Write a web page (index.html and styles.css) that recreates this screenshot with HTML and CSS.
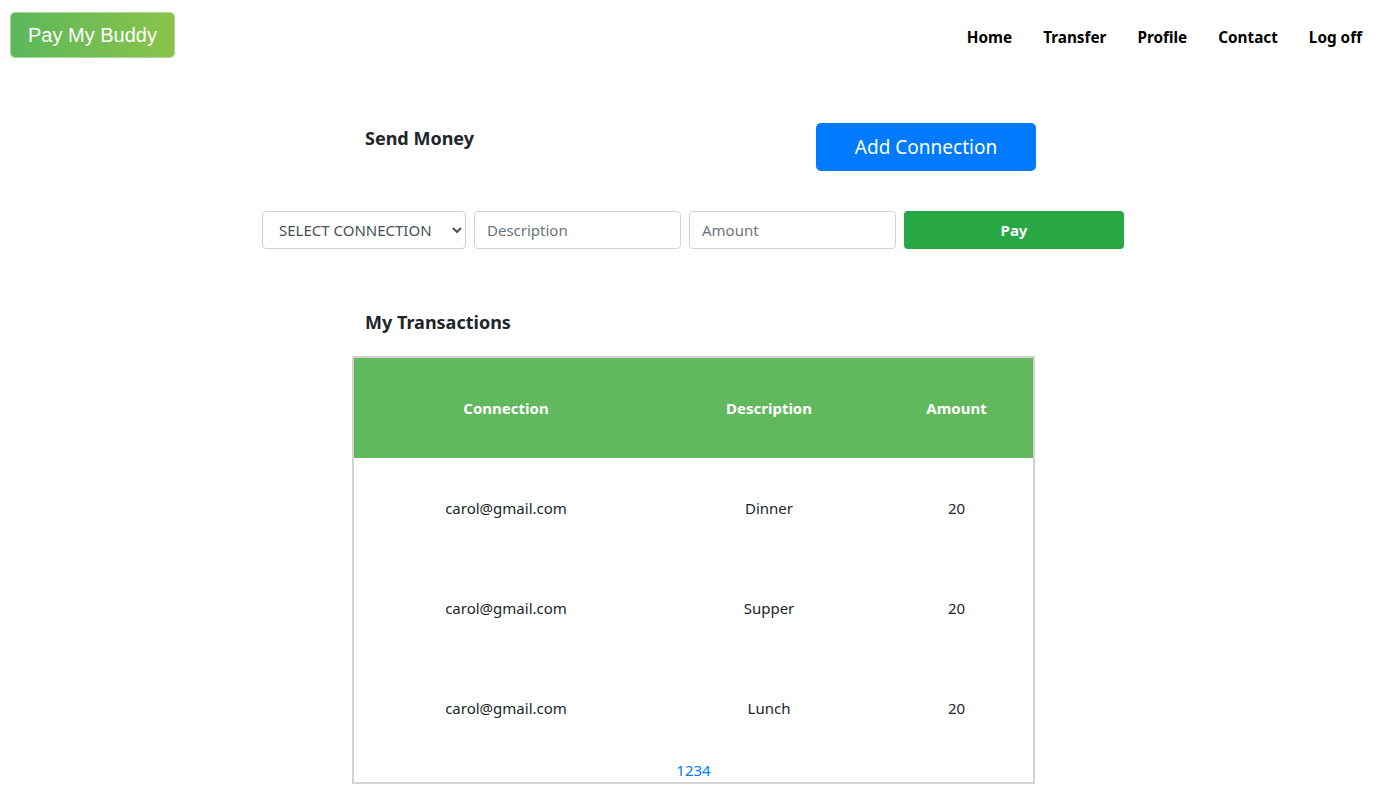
FILE: index.html
```html
<!DOCTYPE html>
<html lang="en">
<head>
<meta charset="utf-8">
<title>Pay My Buddy - Transfer</title>
<link rel="stylesheet" href="styles.css">
</head>
<body>
<header class="topbar">
  <a class="logo" href="#">Pay My Buddy</a>
  <nav class="nav">
    <a href="#">Home</a>
    <a href="#">Transfer</a>
    <a href="#">Profile</a>
    <a href="#">Contact</a>
    <a href="#">Log off</a>
  </nav>
</header>
<main class="main">
  <section class="send-head">
    <h2 class="title">Send Money</h2>
    <button class="btn-add">Add Connection</button>
  </section>
  <form class="pay-form">
    <select class="field select">
      <option>SELECT CONNECTION</option>
    </select>
    <input class="field" type="text" placeholder="Description">
    <input class="field" type="text" placeholder="Amount">
    <button class="btn-pay" type="button">Pay</button>
  </form>
  <section class="tx">
    <h2 class="title tx-title">My Transactions</h2>
    <div class="table-box">
      <table class="tx-table">
        <thead>
          <tr><th class="c1">Connection</th><th class="c2">Description</th><th class="c3">Amount</th></tr>
        </thead>
        <tbody>
          <tr><td>carol@gmail.com</td><td>Dinner</td><td>20</td></tr>
          <tr><td>carol@gmail.com</td><td>Supper</td><td>20</td></tr>
          <tr><td>carol@gmail.com</td><td>Lunch</td><td>20</td></tr>
        </tbody>
      </table>
      <div class="pager"><a href="#">1</a><a href="#">2</a><a href="#">3</a><a href="#">4</a></div>
    </div>
  </section>
</main>
</body>
</html>
```
FILE: styles.css
```css
* { box-sizing: border-box; }
body {
  margin: 0;
  font-family: "Noto Sans", "Open Sans", sans-serif;
  color: #212529;
  background: #fff;
}
.topbar {
  display: flex;
  justify-content: space-between;
  align-items: center;
  padding: 12px 24px 0 10px;
  height: 58px;
}
.logo {
  display: flex;
  align-items: center;
  justify-content: center;
  width: 165px;
  height: 46px;
  padding-top: 1px;
  border-radius: 5px;
  background: linear-gradient(90deg, #5cb85c, #8bc34a);
  border: 1px solid #a9d59a;
  color: #fff;
  font-family: "Liberation Sans", Arial, sans-serif;
  font-size: 20px;
  text-decoration: none;
}
.nav {
  display: flex;
  gap: 31px;
  margin-top: 4px;
}
.nav a {
  color: #000;
  font-weight: 700;
  font-size: 15.3px;
  text-decoration: none;
}
.main {
  width: 862px;
  margin: 0 auto;
  padding-top: 65px;
}
.send-head {
  display: flex;
  justify-content: space-between;
  align-items: flex-start;
  padding: 0 88px 0 103px;
}
.title {
  margin: 0;
  font-size: 18px;
  font-weight: 700;
  line-height: 31px;
}
.btn-add {
  width: 220px;
  height: 48px;
  border: 0;
  border-radius: 5px;
  background: #007bff;
  color: #fff;
  font-family: inherit;
  font-size: 19px;
  padding-top: 1px;
}
.pay-form {
  display: flex;
  gap: 8px;
  margin-top: 40px;
}
.field {
  height: 38px;
  border: 1px solid #ced4da;
  border-radius: 4px;
  padding: 0 12px;
  font-family: inherit;
  font-size: 15px;
  color: #495057;
  background: #fff;
  width: 207px;
}
.field::placeholder { color: #6c757d; }
.select {
  width: 204px;
  padding: 0 4px 0 12px;
}
.btn-pay {
  width: 220px;
  height: 38px;
  border: 0;
  border-radius: 4px;
  background: #28a745;
  color: #fff;
  font-family: inherit;
  font-weight: 700;
  font-size: 15px;
}
.tx {
  margin-top: 58px;
  padding-left: 90px;
}
.tx-title {
  padding-left: 13px;
}
.table-box {
  margin-top: 18px;
  width: 683px;
  border: 2px solid #d3d3d3;
}
.tx-table {
  width: 100%;
  border-collapse: collapse;
  table-layout: fixed;
}
.tx-table th, .tx-table td {
  height: 100px;
  text-align: center;
  font-size: 15px;
  padding: 0;
}
.tx-table th {
  background: #62b85c;
  color: #fff;
  font-weight: 700;
}
.tx-table td { font-weight: 400; }
.c1 { width: 304px; }
.c2 { width: 222px; }
.pager {
  text-align: center;
  padding: 2px 0 2px;
  font-size: 15px;
  line-height: 20px;
}
.pager a {
  color: #007bff;
  text-decoration: none;
}
```
